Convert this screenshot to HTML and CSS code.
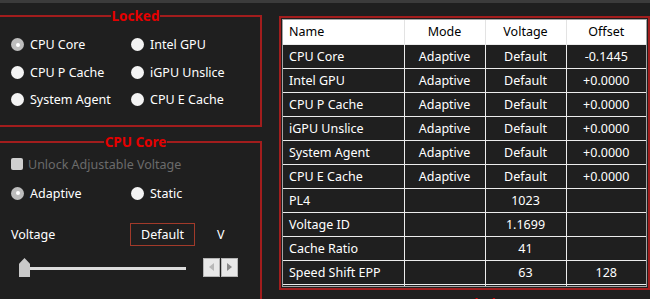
FILE: index.html
```html
<!DOCTYPE html>
<html lang="en">
<head>
  <meta charset="UTF-8">
  <title>Voltage Control</title>
  <link rel="stylesheet" href="styles.css">
</head>
<body>
<div class="topbar"></div>
<div class="main">
  <!-- LEFT SIDE -->
  <div class="side">
    <fieldset class="group locked">
      <legend>Locked</legend>
      <div class="radio-grid">
        <label class="radio on"><span class="dot"></span>CPU Core</label>
        <label class="radio"><span class="dot"></span>Intel GPU</label>
        <label class="radio"><span class="dot"></span>CPU P Cache</label>
        <label class="radio"><span class="dot"></span>iGPU Unslice</label>
        <label class="radio"><span class="dot"></span>System Agent</label>
        <label class="radio"><span class="dot"></span>CPU E Cache</label>
      </div>
    </fieldset>

    <fieldset class="group core">
      <legend>CPU Core</legend>
      <label class="check-row"><span class="box"></span>Unlock Adjustable Voltage</label>
      <div class="mode-row">
        <label class="radio on"><span class="dot"></span>Adaptive</label>
        <label class="radio"><span class="dot"></span>Static</label>
      </div>
      <div class="volt-row">
        <span class="volt-label">Voltage</span>
        <span class="volt-value">Default</span>
        <span class="volt-unit">V</span>
      </div>
      <div class="slider-row">
        <div class="slider">
          <div class="track"></div>
          <div class="thumb"></div>
        </div>
        <div class="spin">
          <button class="spin-btn dim"><svg width="5" height="8" viewBox="0 0 5 8"><path d="M5 0V8L0 4Z"/></svg></button>
          <button class="spin-btn"><svg width="5" height="8" viewBox="0 0 5 8"><path d="M0 0V8L5 4Z"/></svg></button>
        </div>
      </div>
    </fieldset>
  </div>

  <!-- RIGHT SIDE -->
  <div class="side">
    <div class="panel">
      <div class="table-wrap">
        <table class="grid">
          <colgroup><col class="c-name"><col class="c-num"><col class="c-num"><col></colgroup>
          <thead>
            <tr><th class="left">Name</th><th>Mode</th><th>Voltage</th><th>Offset</th></tr>
          </thead>
          <tbody>
            <tr><td class="left">CPU Core</td><td>Adaptive</td><td>Default</td><td>-0.1445</td></tr>
            <tr><td class="left">Intel GPU</td><td>Adaptive</td><td>Default</td><td>+0.0000</td></tr>
            <tr><td class="left">CPU P Cache</td><td>Adaptive</td><td>Default</td><td>+0.0000</td></tr>
            <tr><td class="left">iGPU Unslice</td><td>Adaptive</td><td>Default</td><td>+0.0000</td></tr>
            <tr><td class="left">System Agent</td><td>Adaptive</td><td>Default</td><td>+0.0000</td></tr>
            <tr><td class="left">CPU E Cache</td><td>Adaptive</td><td>Default</td><td>+0.0000</td></tr>
            <tr><td class="left">PL4</td><td></td><td>1023</td><td></td></tr>
            <tr><td class="left">Voltage ID</td><td></td><td>1.1699</td><td></td></tr>
            <tr><td class="left">Cache Ratio</td><td></td><td>41</td><td></td></tr>
            <tr><td class="left">Speed Shift EPP</td><td></td><td>63</td><td>128</td></tr>
            <tr><td class="left">&nbsp;</td><td></td><td></td><td></td></tr>
          </tbody>
        </table>
      </div>
    </div>
    <div class="next-title">Power Limits</div>
  </div>
</div>
</body>
</html>
```
FILE: styles.css
```css
:root{
  --bg:#1f1f1f;
  --bar:#3b3b3b;
  --line:#a21d1d;
  --title:#e50000;
  --text:#ffffff;
  --dim:#6b6b6b;
}
*{box-sizing:border-box}
html,body{margin:0;padding:0}
body{background:var(--bg);color:var(--text);font-family:"Noto Sans","Open Sans",sans-serif;font-size:12.5px;height:299px;overflow:hidden}
.topbar{height:3px;background:var(--bar)}
.main{display:grid;grid-template-columns:265px 371px;column-gap:17px;margin-left:-3px;padding-top:5px}

/* group boxes */
.group{margin:0;border:2px solid var(--line);min-width:0}
.group legend{margin:0 auto;padding:0 1px;font-size:13.5px;font-weight:bold;line-height:16px;color:var(--title)}
.locked{height:119px;padding:7px 0 0 12px}
.core{margin-top:7px;height:180px;padding:2px 0 0 12px}

.radio-grid{display:grid;grid-template-columns:120px 120px;grid-auto-rows:27.5px}
.radio{display:flex;align-items:center;gap:6px;white-space:nowrap}
.dot{width:13px;height:13px;border-radius:50%;background:#f3f3f3;flex:none;display:flex;align-items:center;justify-content:center}
.radio.on .dot{background:#bdbdbd}
.radio.on .dot::after{content:"";width:4px;height:4px;border-radius:50%;background:#fff}

.check-row{height:24px;display:flex;align-items:center;gap:5px;color:var(--dim)}
.box{width:12px;height:12px;border-radius:2px;background:#cfcfcf;flex:none}
.mode-row{height:34px;display:grid;grid-template-columns:120px 120px;align-items:center}

.volt-row{margin-top:13px;height:23px;display:flex;align-items:center}
.volt-label{width:119px}
.volt-value{width:65px;height:23px;border:1px solid #a13a2a;display:flex;align-items:center;justify-content:center}
.volt-unit{margin-left:22px}

.slider-row{margin-top:11px;height:20px;display:flex;align-items:center}
.slider{position:relative;width:167px;height:20px;margin-left:8px}
.track{position:absolute;left:1px;right:0;top:10px;height:3px;background:#dcdcdc}
.thumb{position:absolute;left:0;top:1px;width:11px;height:19px;background:#c9c9c9;clip-path:polygon(50% 0,100% 30%,100% 100%,0 100%,0 30%)}
.spin{display:flex;gap:1px;margin-left:17px}
.spin-btn{width:17px;height:19px;padding:0;border:1px solid #b5b5b5;background:#e8e8e8;display:flex;align-items:center;justify-content:center}
.spin-btn svg{fill:#8a8a8a}
.spin-btn.dim svg{fill:#b8b8b8}

/* table panel */
.panel{margin-top:8px;border:2px solid var(--line);padding:1px}
.table-wrap{border:1px solid #a4a4a4;height:268px;overflow:hidden}
.grid{width:100%;border-collapse:collapse;border-style:hidden;table-layout:fixed;font-size:12.5px}
.c-name{width:121px}
.c-num{width:81px}
.grid th,.grid td{height:24px;padding:0;text-align:center;border:1px solid #ececec;white-space:nowrap}
.grid th{background:#fff;color:#000;font-weight:normal;border-color:#e3e3e3;border-bottom-color:#ececec}
.grid .left{text-align:left;padding-left:6px}
.next-title{margin-top:6px;text-align:center;font-size:13.5px;font-weight:bold;line-height:16px;color:var(--title)}
```
